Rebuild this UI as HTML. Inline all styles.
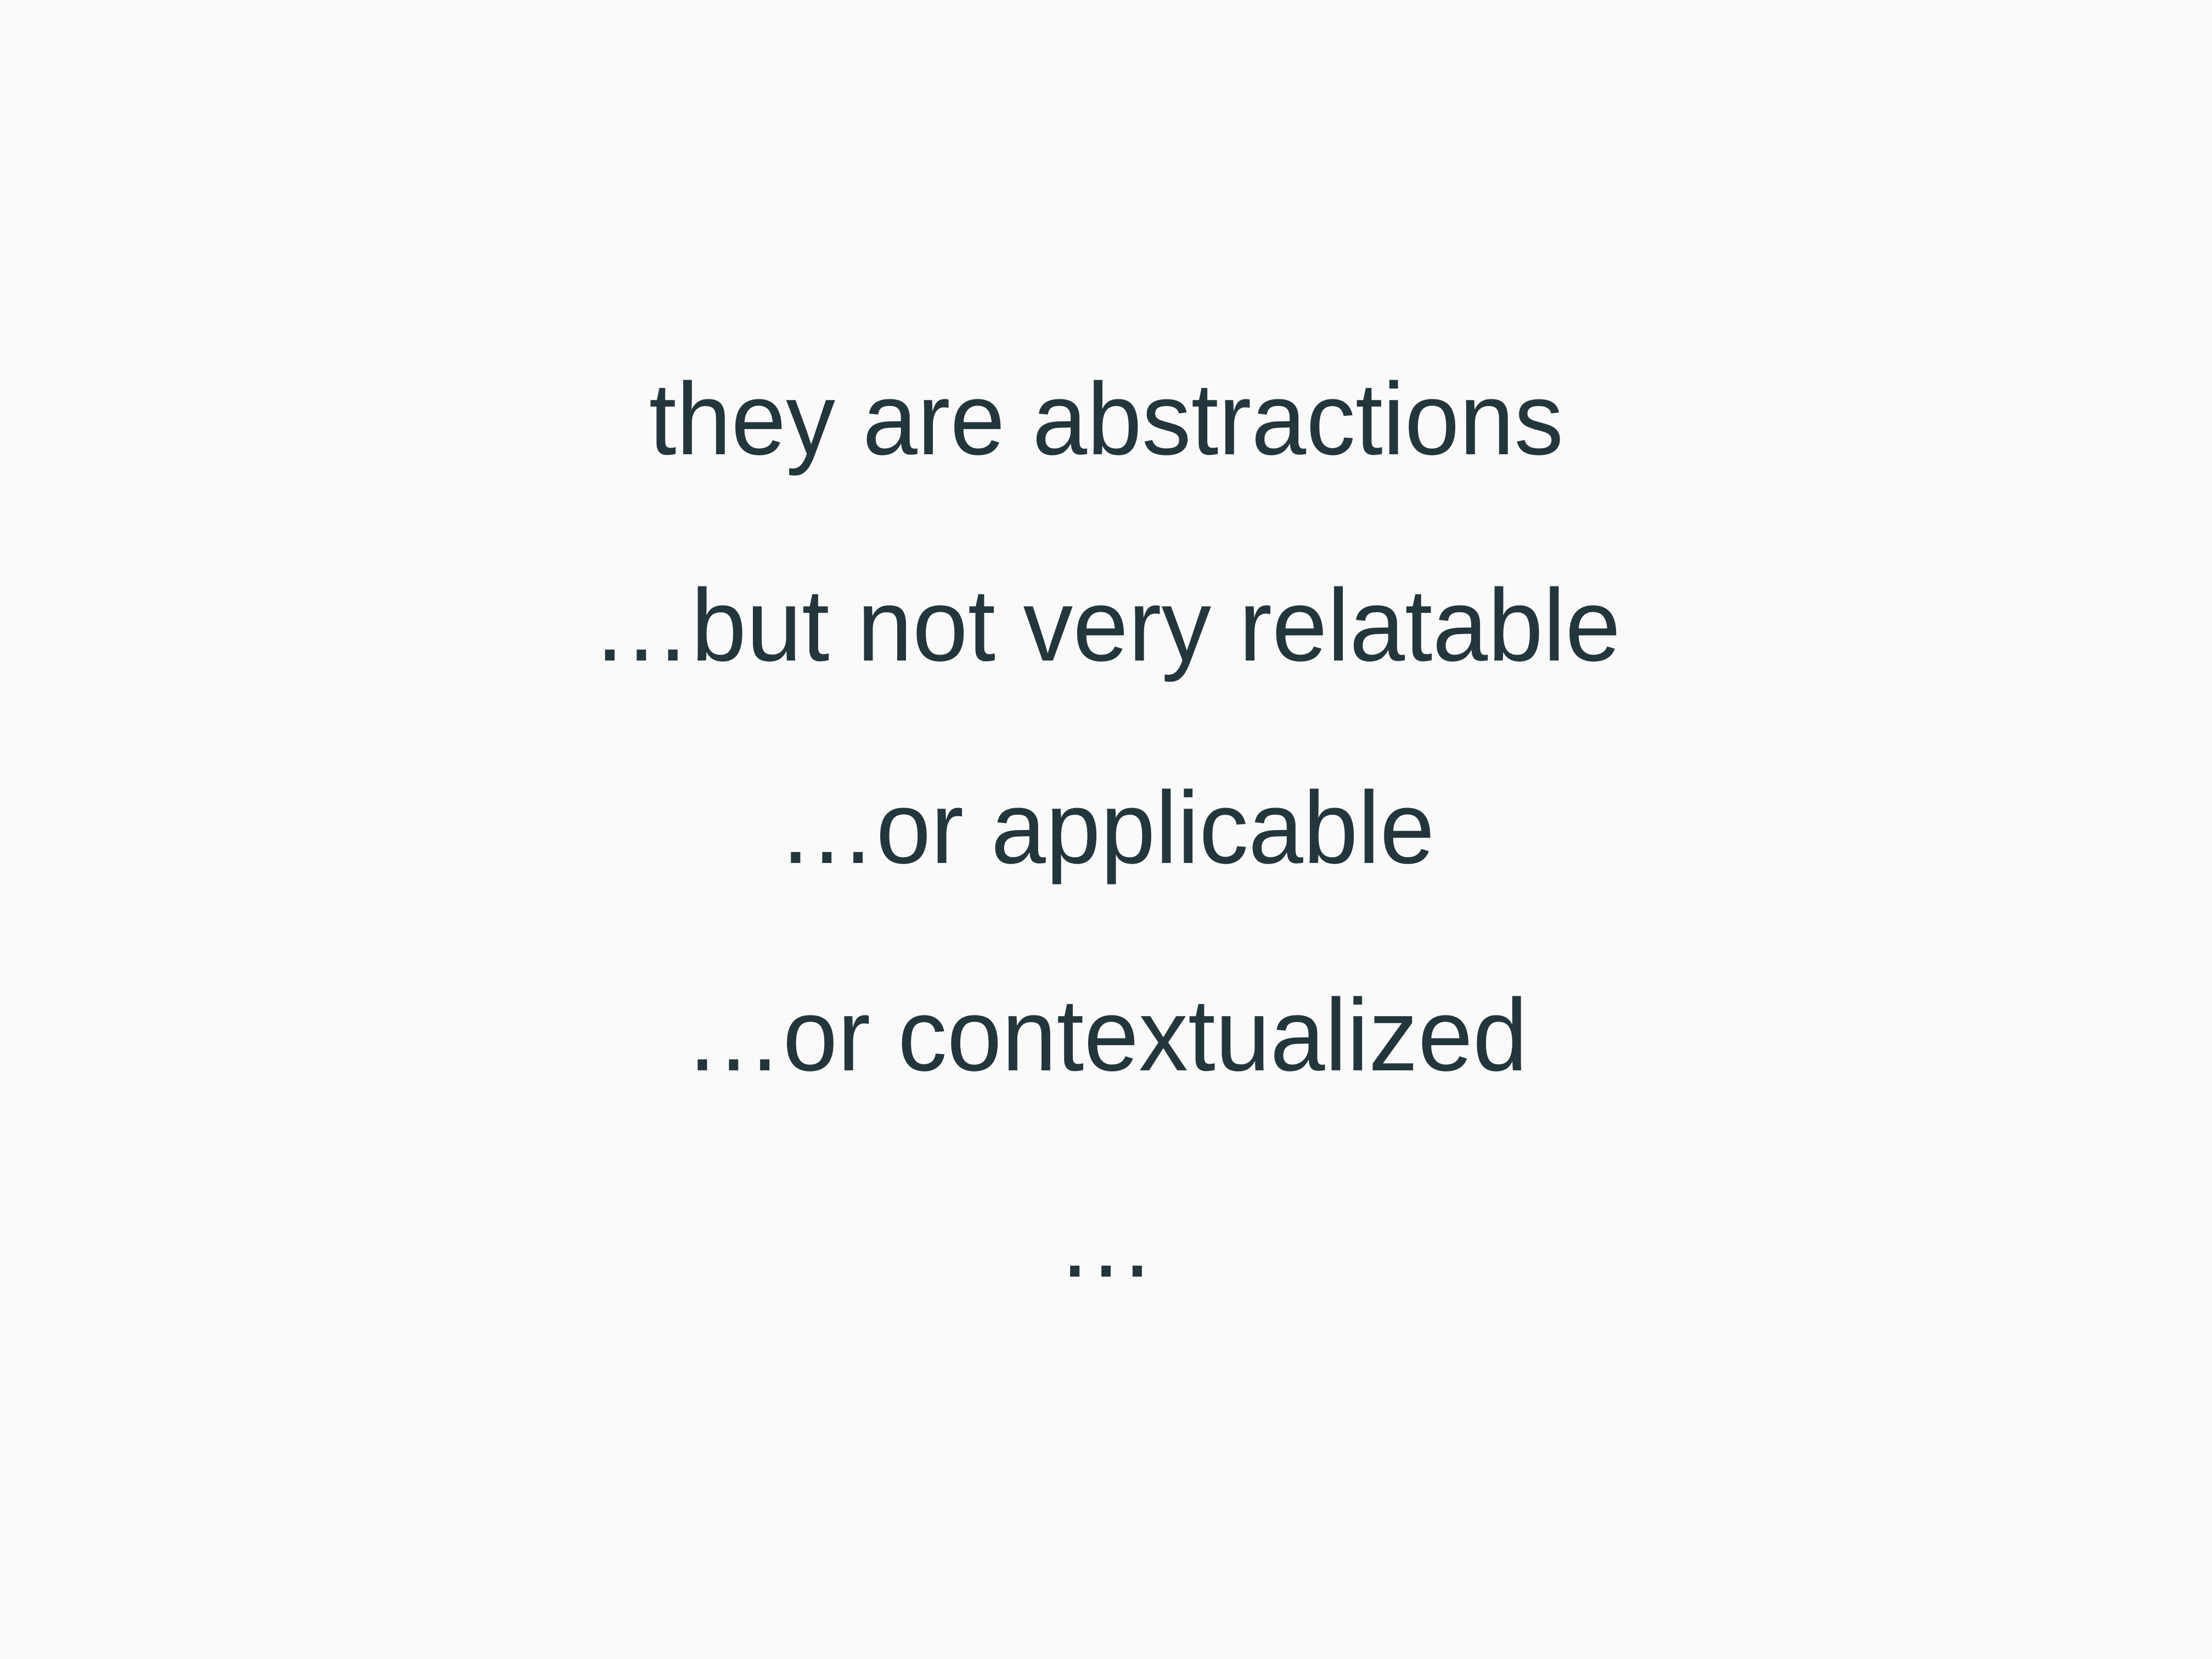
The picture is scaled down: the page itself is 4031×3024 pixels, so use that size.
<!DOCTYPE html>
<html><head><meta charset="utf-8"><style>
html,body{margin:0;padding:0;background:#fafafa;}
body{width:4031px;height:3024px;position:relative;overflow:hidden;}
.l{position:absolute;left:0;width:4031px;text-align:center;font-family:"Liberation Sans",sans-serif;font-size:187px;line-height:187px;height:187px;color:#23363b;white-space:nowrap;}
.l span{display:inline-block;transform:scaleX(0.96);transform-origin:center;}
</style></head><body>
<div class="l" style="top:670px"><span>they are abstractions</span></div>
<div class="l" style="top:1046px"><span style="transform:scaleX(0.97)">…but not very relatable</span></div>
<div class="l" style="top:1415px"><span>…or applicable</span></div>
<div class="l" style="top:1793px"><span>…or contextualized</span></div>
<div class="l" style="top:2169px"><span>…</span></div>
</body></html>
